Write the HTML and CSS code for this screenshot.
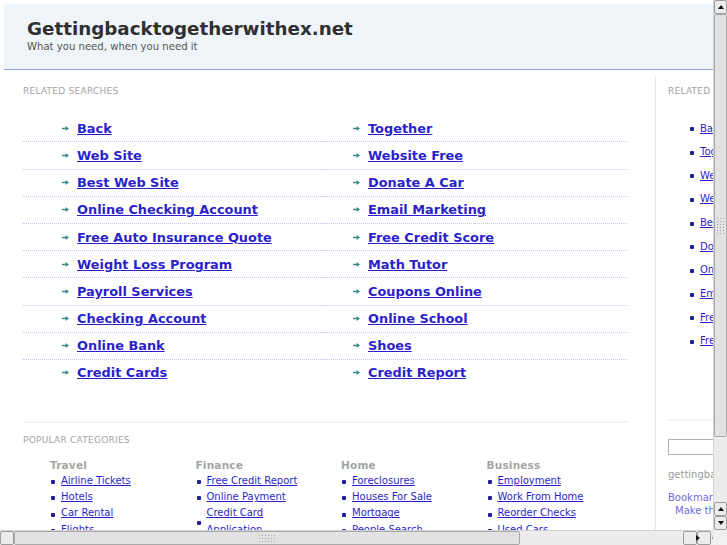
FILE: index.html
```html
<!DOCTYPE html>
<html>
<head>
<meta charset="utf-8">
<title>Gettingbacktogetherwithex.net</title>
<link rel="stylesheet" href="styles.css">
</head>
<body>
<div class="screen">
  <div class="viewport">
    <div class="page">
      <header class="header">
        <h1 class="site-title">Gettingbacktogetherwithex.net</h1>
        <p class="tagline">What you need, when you need it</p>
      </header>
      <div class="main">
        <div class="left">
          <h2 class="section-title">Related Searches</h2>
          <ul class="links">
            <li><svg class="arrow" viewBox="0 0 7 5"><path d="M0 1.8h3.6V0L7 2.5 3.6 5V3.2H0z"/></svg><a href="#">Back</a></li>
            <li><svg class="arrow" viewBox="0 0 7 5"><path d="M0 1.8h3.6V0L7 2.5 3.6 5V3.2H0z"/></svg><a href="#">Together</a></li>
            <li><svg class="arrow" viewBox="0 0 7 5"><path d="M0 1.8h3.6V0L7 2.5 3.6 5V3.2H0z"/></svg><a href="#">Web Site</a></li>
            <li><svg class="arrow" viewBox="0 0 7 5"><path d="M0 1.8h3.6V0L7 2.5 3.6 5V3.2H0z"/></svg><a href="#">Website Free</a></li>
            <li><svg class="arrow" viewBox="0 0 7 5"><path d="M0 1.8h3.6V0L7 2.5 3.6 5V3.2H0z"/></svg><a href="#">Best Web Site</a></li>
            <li><svg class="arrow" viewBox="0 0 7 5"><path d="M0 1.8h3.6V0L7 2.5 3.6 5V3.2H0z"/></svg><a href="#">Donate A Car</a></li>
            <li><svg class="arrow" viewBox="0 0 7 5"><path d="M0 1.8h3.6V0L7 2.5 3.6 5V3.2H0z"/></svg><a href="#">Online Checking Account</a></li>
            <li><svg class="arrow" viewBox="0 0 7 5"><path d="M0 1.8h3.6V0L7 2.5 3.6 5V3.2H0z"/></svg><a href="#">Email Marketing</a></li>
            <li><svg class="arrow" viewBox="0 0 7 5"><path d="M0 1.8h3.6V0L7 2.5 3.6 5V3.2H0z"/></svg><a href="#">Free Auto Insurance Quote</a></li>
            <li><svg class="arrow" viewBox="0 0 7 5"><path d="M0 1.8h3.6V0L7 2.5 3.6 5V3.2H0z"/></svg><a href="#">Free Credit Score</a></li>
            <li><svg class="arrow" viewBox="0 0 7 5"><path d="M0 1.8h3.6V0L7 2.5 3.6 5V3.2H0z"/></svg><a href="#">Weight Loss Program</a></li>
            <li><svg class="arrow" viewBox="0 0 7 5"><path d="M0 1.8h3.6V0L7 2.5 3.6 5V3.2H0z"/></svg><a href="#">Math Tutor</a></li>
            <li><svg class="arrow" viewBox="0 0 7 5"><path d="M0 1.8h3.6V0L7 2.5 3.6 5V3.2H0z"/></svg><a href="#">Payroll Services</a></li>
            <li><svg class="arrow" viewBox="0 0 7 5"><path d="M0 1.8h3.6V0L7 2.5 3.6 5V3.2H0z"/></svg><a href="#">Coupons Online</a></li>
            <li><svg class="arrow" viewBox="0 0 7 5"><path d="M0 1.8h3.6V0L7 2.5 3.6 5V3.2H0z"/></svg><a href="#">Checking Account</a></li>
            <li><svg class="arrow" viewBox="0 0 7 5"><path d="M0 1.8h3.6V0L7 2.5 3.6 5V3.2H0z"/></svg><a href="#">Online School</a></li>
            <li><svg class="arrow" viewBox="0 0 7 5"><path d="M0 1.8h3.6V0L7 2.5 3.6 5V3.2H0z"/></svg><a href="#">Online Bank</a></li>
            <li><svg class="arrow" viewBox="0 0 7 5"><path d="M0 1.8h3.6V0L7 2.5 3.6 5V3.2H0z"/></svg><a href="#">Shoes</a></li>
            <li><svg class="arrow" viewBox="0 0 7 5"><path d="M0 1.8h3.6V0L7 2.5 3.6 5V3.2H0z"/></svg><a href="#">Credit Cards</a></li>
            <li><svg class="arrow" viewBox="0 0 7 5"><path d="M0 1.8h3.6V0L7 2.5 3.6 5V3.2H0z"/></svg><a href="#">Credit Report</a></li>
          </ul>
          <div class="popular">
            <h2 class="section-title">Popular Categories</h2>
            <div class="cats">
              <div class="cat">
                <h3>Travel</h3>
                <ul>
                  <li><a href="#">Airline Tickets</a></li>
                  <li><a href="#">Hotels</a></li>
                  <li><a href="#">Car Rental</a></li>
                  <li><a href="#">Flights</a></li>
                </ul>
              </div>
              <div class="cat">
                <h3>Finance</h3>
                <ul>
                  <li><a href="#">Free Credit Report</a></li>
                  <li><a href="#">Online Payment</a></li>
                  <li><a href="#">Credit Card Application</a></li>
                  <li><a href="#">Insurance</a></li>
                </ul>
              </div>
              <div class="cat">
                <h3>Home</h3>
                <ul>
                  <li><a href="#">Foreclosures</a></li>
                  <li><a href="#">Houses For Sale</a></li>
                  <li><a href="#">Mortgage</a></li>
                  <li><a href="#">People Search</a></li>
                </ul>
              </div>
              <div class="cat">
                <h3>Business</h3>
                <ul>
                  <li><a href="#">Employment</a></li>
                  <li><a href="#">Work From Home</a></li>
                  <li><a href="#">Reorder Checks</a></li>
                  <li><a href="#">Used Cars</a></li>
                </ul>
              </div>
            </div>
          </div>
        </div>
        <div class="right">
          <h2 class="section-title">Related Searches</h2>
          <ul class="side-links">
            <li><a href="#">Back</a></li>
            <li><a href="#">Together</a></li>
            <li><a href="#">Web Site</a></li>
            <li><a href="#">Website Free</a></li>
            <li><a href="#">Best Web Site</a></li>
            <li><a href="#">Donate A Car</a></li>
            <li><a href="#">Online Checking Account</a></li>
            <li><a href="#">Email Marketing</a></li>
            <li><a href="#">Free Auto Insurance Quote</a></li>
            <li><a href="#">Free Credit Score</a></li>
          </ul>
          <div class="side-search">
            <input class="search-box" type="text">
            <p class="domain">gettingbacktogetherwithex.net</p>
            <p class="bookmark"><a href="#">Bookmark this page</a></p>
            <p class="homepage"><a href="#">Make this your homepage</a></p>
          </div>
        </div>
      </div>
    </div>
  </div>
  <div class="vscroll">
    <div class="sb-btn"><span class="tri up"></span></div>
    <div class="sb-thumb v"><span class="grip"><i></i><i></i><i></i><i></i><i></i><i></i><i></i><i></i><i></i><i></i><i></i><i></i><i></i><i></i><i></i><i></i><i></i><i></i></span></div>
    <div class="sb-trough"></div>
    <div class="sb-btn"><span class="tri up"></span></div>
    <div class="sb-btn"><span class="tri down"></span></div>
  </div>
  <div class="hscroll">
    <div class="sb-btn"><span class="tri left"></span></div>
    <div class="sb-thumb h"><span class="grip"><i></i><i></i><i></i><i></i><i></i><i></i><i></i><i></i><i></i><i></i><i></i><i></i><i></i><i></i><i></i><i></i><i></i><i></i></span></div>
    <div class="sb-trough"></div>
    <div class="sb-btn"><span class="tri left"></span></div>
    <div class="sb-btn"><span class="tri right"></span></div>
  </div>
  <div class="corner"></div>
</div>
</body>
</html>
```

FILE: styles.css
```css
* { box-sizing: border-box; }
html, body { margin: 0; padding: 0; background: #fff; }
body { font-family: "DejaVu Sans", "Verdana", sans-serif; }
ul { list-style: none; margin: 0; padding: 0; }
h1, h2, h3, p { margin: 0; }

.screen {
  display: grid;
  grid-template-columns: 713px 14px;
  grid-template-rows: 530px 15px;
  width: 727px;
  height: 545px;
  overflow: clip;
}
.viewport { overflow: clip; background: #fff; min-width: 0; min-height: 0; }
.page { width: 920px; padding: 4px; }

.header {
  background: #eff5f8;
  border-bottom: 1px solid #8fa4da;
  padding: 14px 23px 16px;
  height: 66px;
}
.site-title {
  font-size: 18.3px;
  line-height: 22px;
  font-weight: bold;
  color: #303030;
}
.tagline {
  font-size: 10.1px;
  line-height: 14px;
  color: #555;
}

.main { display: flex; margin-top: 6px; }
.left {
  width: 652px;
  height: 470px;
  padding: 0 28px 0 19px;
  border-right: 1px solid #dfe8f4;
}
.section-title {
  font-size: 9px;
  line-height: 12px;
  font-weight: normal;
  color: #a3a3a3;
  letter-spacing: 0.25px;
  text-transform: uppercase;
  padding-top: 9px;
  white-space: nowrap;
}

.links {
  display: grid;
  grid-template-columns: 302px 303px;
  margin-top: 18.2px;
}
.links li {
  height: 27.2px;
  display: flex;
  align-items: center;
  padding-left: 39px;
  border-bottom: 1px dotted #b8cbe8;
}
.links li:nth-child(even) { padding-left: 28px; }
.links li:nth-last-child(-n+2) { border-bottom-color: transparent; }
.arrow { width: 7px; height: 5px; fill: #3e8c85; margin-right: 8px; flex: none; }
.links a {
  font-size: 12.9px;
  font-weight: bold;
  color: #2b1fcc;
  text-decoration: underline;
  line-height: 17px;
}

.popular {
  margin-top: 33.8px;
  border-top: 2px solid #eef3f9;
}
.popular .section-title { padding-top: 11px; }
.cats {
  display: grid;
  grid-template-columns: repeat(4, 145.5px);
  padding-left: 27px;
  margin-top: 13px;
}
.cat h3 {
  font-size: 10.5px;
  line-height: 12px;
  color: #a4a4a4;
  letter-spacing: 0.2px;
}
.cat ul { margin-top: 1.8px; }
.cat li {
  display: flex;
  align-items: center;
  width: 120px;
}
.cat li::before {
  content: "";
  width: 4px;
  height: 4px;
  border-radius: 1px;
  background: #1f1f9c;
  margin: 2px 6px 0 1px;
  flex: none;
}
.cat a {
  font-size: 10px;
  line-height: 16.4px;
  color: #2b1fcc;
}

.right { width: 220px; padding-left: 12px; }
.side-links { margin-top: 19.2px; }
.side-links li {
  height: 23.67px;
  display: flex;
  align-items: center;
  padding-left: 22px;
  white-space: nowrap;
}
.side-links li::before {
  content: "";
  width: 4px;
  height: 4px;
  border-radius: 1px;
  background: #1f1f9c;
  margin: 2px 6px 0 0;
  flex: none;
}
.side-links a { font-size: 10px; color: #2b1fcc; }

.side-search {
  margin-top: 66.3px;
  border-top: 2px solid #eef3f9;
  padding-top: 18px;
}
.search-box {
  display: block;
  width: 160px;
  height: 16px;
  border: 1px solid #b4b4b4;
  padding: 0;
  margin: 0;
  background: #fff;
}
.domain {
  margin-top: 14px;
  font-size: 10px;
  line-height: 12px;
  color: #9a9a9a;
  white-space: nowrap;
}
.bookmark, .homepage {
  font-size: 10px;
  line-height: 13px;
  white-space: nowrap;
}
.bookmark { margin-top: 10px; }
.homepage { padding-left: 7px; }
.bookmark a, .homepage a { color: #6d6bd8; text-decoration: none; }

/* scrollbars */
.vscroll, .hscroll {
  display: flex;
  background: #ececec;
  min-width: 0;
  min-height: 0;
}
.vscroll { flex-direction: column; border-left: 1px solid #d2d2d2; }
.hscroll { flex-direction: row; border-top: 1px solid #d2d2d2; padding-right: 2px; }
.sb-trough { flex: 1; }
.sb-btn {
  flex: none;
  width: 13px;
  height: 14px;
  border: 1px solid #9c9c9c;
  border-radius: 2px;
  background: #ececec;
  display: flex;
  align-items: center;
  justify-content: center;
}
.hscroll .sb-btn { width: 14px; height: 14px; }
.sb-thumb {
  flex: none;
  border: 1px solid #a9a9a9;
  border-radius: 2px;
  background: #e2e2e2;
  display: flex;
  align-items: center;
  justify-content: center;
}
.sb-thumb.v { height: 423px; }
.sb-thumb.h { width: 506px; }
.grip {
  display: grid;
  gap: 2px;
}
.sb-thumb.v .grip { grid-template-columns: repeat(3, 1px); }
.sb-thumb.h .grip { grid-template-columns: repeat(6, 1px); }
.grip i { width: 1px; height: 1px; background: #a6a6a6; }
.tri { width: 0; height: 0; border: 3.5px solid transparent; }
.tri.up { border-bottom: 4px solid #111; border-top-width: 0; }
.tri.down { border-top: 4px solid #111; border-bottom-width: 0; }
.tri.left { border-right: 4px solid #111; border-left-width: 0; }
.tri.right { border-left: 4px solid #111; border-right-width: 0; }
.corner { background: #f0f0f0; }
```
